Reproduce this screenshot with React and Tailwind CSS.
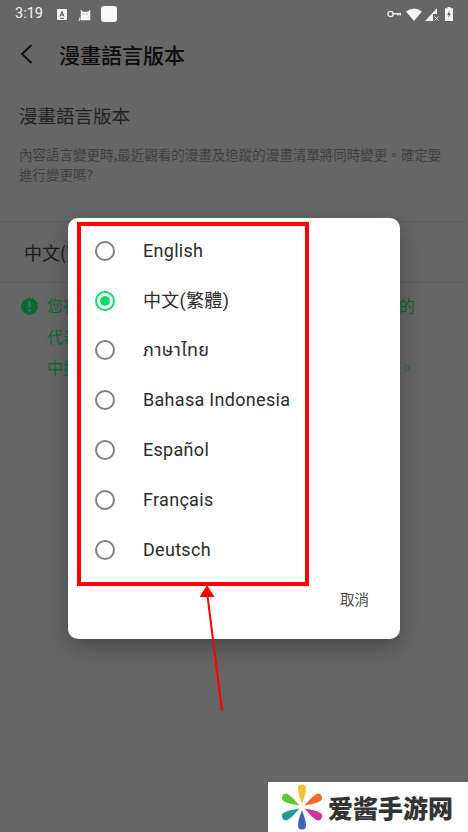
const CJK = { };
const langs = ["English", "中文(繁體)", "ภาษาไทย", "Bahasa Indonesia", "Español", "Français", "Deutsch"];

function StatusBar() {
  return (
    <div className="h-[27px] flex items-center pl-[15px] pr-[15px] pt-[1px] text-white">
      <span className="text-[14.5px] leading-none w-[42px] font-['Roboto',sans-serif] text-[#f4f4f4]">3:19</span>
      <svg width="10" height="11" viewBox="0 0 10 11" className="ml-0">
        <path d="M0 1a1 1 0 0 1 1-1h8a1 1 0 0 1 1 1v9a1 1 0 0 1-1 1H1a1 1 0 0 1-1-1z" fill="#f4f4f4" />
        <path d="M3 7.5 5 2.5l2 5M3.8 6h2.4M3 9.3h4" stroke="#555" strokeWidth="1" fill="none" />
      </svg>
      <svg width="15" height="15" viewBox="0 0 15 15" className="ml-[11px]">
        <path d="M3 13V3l2 2h5l2-2v10zM0.5 14q1.5 0 1.5-2v-2" fill="#f4f4f4" stroke="#f4f4f4" strokeWidth=".5" />
        <circle cx="6" cy="7" r=".6" fill="#777" />
        <circle cx="9" cy="7" r=".6" fill="#777" />
      </svg>
      <div className="ml-[8px] w-[16px] h-[16px] rounded-[3px] bg-[#f8f8f8]" />
      <div className="flex-1" />
      <svg width="14" height="8" viewBox="0 0 14 8">
        <circle cx="3.5" cy="4" r="2.6" fill="none" stroke="#f0f0f0" strokeWidth="1.4" />
        <path d="M6 3h8v2.6h-1.5v-1h-1v1H10v-1H6z" fill="#f0f0f0" />
      </svg>
      <svg width="16" height="13" viewBox="0 0 16 13" className="ml-[5px]">
        <path d="M0 3.5Q8-2.5 16 3.5L8 13z" fill="#f6f6f6" />
      </svg>
      <svg width="15" height="14" viewBox="0 0 15 14" className="ml-[3px]">
        <path d="M0 14 12 1v6H8v7z" fill="#f0f0f0" />
        <path d="M9.5 9.5l4 4M13.5 9.5l-4 4" stroke="#e8e8e8" strokeWidth="1" />
      </svg>
      <svg width="8" height="14" viewBox="0 0 8 14" className="ml-[5px]">
        <path d="M2.5 0h3v1.3H8V14H0V1.3h2.5z" fill="#f4f4f4" />
        <path d="M4.8 3 2.2 8h1.6l-.6 3.5L5.8 6.5H4.2z" fill="#555" />
      </svg>
    </div>
  );
}

function Logo() {
  const petals = [
    ["#f5c12e", 0], ["#f26a30", 60], ["#c9369f", 120],
    ["#3a66b5", 180], ["#1f9e94", 240], ["#66c52f", 300],
  ];
  return (
    <svg width="44" height="48" viewBox="-22 -24 44 48">
      {petals.map(([c, a]) => (
        <path key={a} transform={`rotate(${a})`} d="M0-3C-1.5-8-4-13-4-18.500a4 4 0 0 1 8 0C4-13 1.500-8 0-3z" fill={c} />
      ))}
    </svg>
  );
}

export default function App() {
  return (
    <div className="relative w-[468px] h-[832px] overflow-hidden bg-[#666666] font-['Noto_Sans_CJK_TC','Noto_Sans_CJK_SC',sans-serif]">
      <StatusBar />
      <div className="h-[54px] flex items-center pl-[20px]">
        <svg width="13" height="20" viewBox="0 0 13 20">
          <path d="M11.500 1 2 10l9.500 9" fill="none" stroke="#0d0d0d" strokeWidth="1.800" />
        </svg>
        <span className="ml-[26px] text-[21px] leading-none text-[#0d0d0d] font-medium">漫畫語言版本</span>
      </div>
      <div className="px-[19px] pt-[20px] h-[141px] border-b border-[#5c5c5c]">
        <div className="text-[18.5px] leading-[28px] text-[#222222]">漫畫語言版本</div>
        <p className="mt-[15px] text-[13.5px] leading-[20px] text-[#404040]">內容語言變更時,最近觀看的漫畫及追蹤的漫畫清單將同時變更。確定要進行變更嗎?</p>
      </div>
      <div className="h-[61px] flex items-center pl-[24px] border-b border-[#5c5c5c] text-[18px] text-[#1a1a1a]">中文(繁體)</div>
      <div className="flex pl-[21px] pt-[7px]">
        <svg width="17" height="17" viewBox="0 0 17 17" className="mt-[8px]">
          <circle cx="8.500" cy="8.500" r="8.500" fill="#006b32" />
          <rect x="7.300" y="3.500" width="2.400" height="6.500" rx="1" fill="#666666" />
          <circle cx="8.500" cy="12.500" r="1.400" fill="#666666" />
        </svg>
        <p className="ml-[9px] w-[384px] text-[16px] leading-[31px] text-[#0a6a36]">
          您在此處選擇語言版本後將會顯示對應的語言所有的<br />
          代表作品內容而未提供此語言版本的作品則由系統<br />
          中挑選其他語言呈現請至我的漫畫設定頁面內管理。
        </p>
      </div>

      {/* dialog */}
      <div className="absolute left-[68px] top-[218px] w-[332px] h-[421px] rounded-[10px] bg-white shadow-[0_8px_24px_rgba(0,0,0,0.3)] flex flex-col">
        <div className="pt-[8px]">
          {langs.map((l, i) => (
            <div key={l} className="h-[49.800px] flex items-center pl-[27px]">
              <span className={`w-[20px] h-[20px] rounded-full border-2 flex items-center justify-center ${i === 1 ? "border-[#0fdc6a]" : "border-[#808080]"}`}>
                {i === 1 && <span className="w-[10px] h-[10px] rounded-full bg-[#0fdc6a]" />}
              </span>
              <span className="ml-[28px] text-[18px] leading-none text-[#2b2b2b] font-['Roboto','Noto_Sans_Thai','Noto_Sans_CJK_TC',sans-serif] tracking-[0.3px]">{l}</span>
            </div>
          ))}
        </div>
        <div className="flex-1 flex justify-end items-start pt-[14px] pr-[31px]">
          <span className="text-[14.500px] leading-[20px] text-[#4a4a4a]">取消</span>
        </div>
      </div>

      {/* annotations */}
      <div className="absolute left-[77px] top-[222px] w-[232px] h-[364px] border-[4px] border-[#fe0000]" />
      <svg className="absolute left-[195px] top-[580px]" width="40" height="135" viewBox="0 0 40 135">
        <path d="M27 131 12 12" stroke="#fe0000" strokeWidth="2" fill="none" />
        <path d="M12 5 4.500 17H19.500z" fill="#fe0000" />
      </svg>

      {/* watermark */}
      <div className="absolute right-0 bottom-0 w-[200px] h-[50px] bg-white flex items-center pl-[12px]">
        <Logo />
        <span className="ml-[4px] text-[25px] leading-none font-black text-[#333333] font-['Noto_Sans_CJK_SC',sans-serif]">爱酱手游网</span>
      </div>
    </div>
  );
}
